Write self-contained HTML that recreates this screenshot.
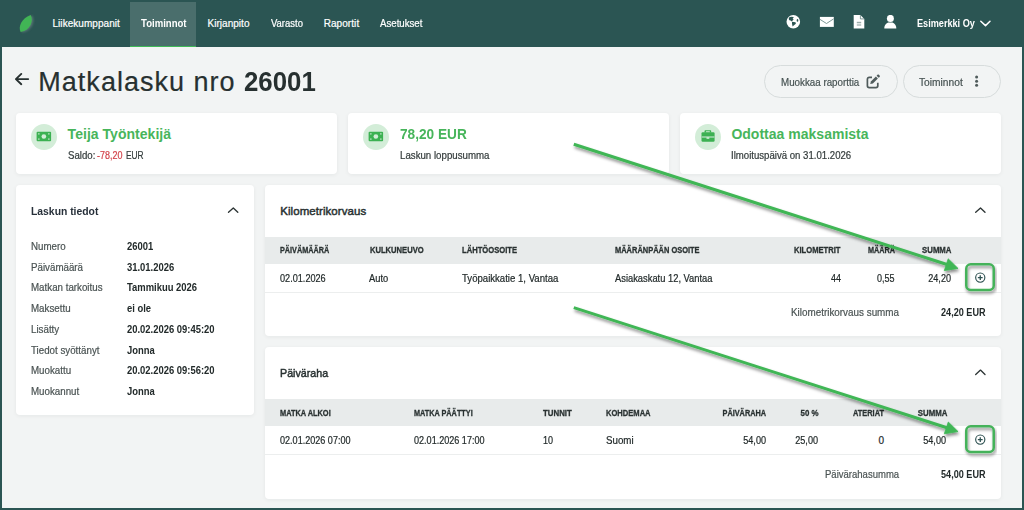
<!DOCTYPE html>
<html><head><meta charset="utf-8">
<style>
*{box-sizing:border-box;margin:0;padding:0}
html,body{width:1024px;height:510px;overflow:hidden}
body{background:#2b5553;font-family:"Liberation Sans",sans-serif;position:relative}
.t{position:absolute;white-space:nowrap;line-height:1;-webkit-text-stroke:0.2px currentColor}
.a{position:absolute}
#main{position:absolute;left:2px;top:47px;width:1020px;height:461px;background:#f2f4f4}
.tab{position:absolute;left:130px;top:2px;width:66px;height:45px;background:#4a6e6c;border-bottom:1px solid #3fb958}
.card{position:absolute;background:#fff;border-radius:4px;box-shadow:0 1px 4px rgba(20,40,40,.06)}
.circ{position:absolute;width:26px;height:26px;border-radius:50%;background:#d3edd8}
.btn{position:absolute;border:1px solid #d7dcdc;border-radius:17px;height:33px;background:#f2f4f4}
.th{position:absolute;left:265px;width:736px;background:#e8ebeb}
.rowb{position:absolute;left:265px;width:736px;height:1px;background:#eceeee}
.pbox{position:absolute;left:965px;width:30px;height:28px;border:2.5px solid #45b25a;border-radius:5px;box-shadow:1px 2px 3px rgba(0,0,0,.35)}
</style></head><body>
<!-- nav -->
<div class="tab"></div>
<svg class="a" style="left:14px;top:10px" width="26" height="28" viewBox="0 0 26 28">
<defs><filter id="ls" x="-50%" y="-50%" width="200%" height="200%"><feGaussianBlur stdDeviation="0.8"/></filter></defs>
<path d="M6.7 22.1 C3.8 17 7.6 8 16.7 4.9 C19.8 10.5 16.6 20 6.7 22.1Z" fill="#76898a" opacity="0.6" transform="translate(1.5,0.5)" filter="url(#ls)"/>
<path d="M6.7 22.1 C3.8 17 7.6 8 16.7 4.9 C19.8 10.5 16.6 20 6.7 22.1Z" fill="#41b555"/>
</svg>
<!-- globe -->
<svg class="a" style="left:786px;top:15px" width="15" height="14" viewBox="0 0 15 14">
<circle cx="7.3" cy="6.8" r="6.8" fill="#fff"/>
<path d="M2.9 2.6 L5 1.8 L7.6 2 L7.4 3 L6.6 3.6 L7.6 4.6 L6.4 5.8 L5.6 6.6 L4.6 5.6 L3.4 5.2 L2.8 4.2Z" fill="#2b5553"/>
<path d="M6 6.8 L9.5 7.2 L9.9 8.8 L8 10.3 L6.6 11.5 L6 8.8Z" fill="#2b5553"/>
<ellipse cx="11.5" cy="5.4" rx="0.8" ry="1.4" fill="#2b5553"/>
</svg>
<!-- mail -->
<svg class="a" style="left:819px;top:16px" width="16" height="12" viewBox="0 0 16 12">
<rect x="0.9" y="0.9" width="13.9" height="10" fill="#fff"/>
<path d="M1 3.4 L7.5 7.5 L14.6 2.9" fill="none" stroke="#6e8c8a" stroke-width="0.9"/>
</svg>
<!-- file -->
<svg class="a" style="left:853px;top:15px" width="12" height="14" viewBox="0 0 12 14">
<path d="M0.7 0 H7.4 L11.3 3.9 V13.5 H0.7Z" fill="#fff"/>
<path d="M7.4 0.2 V3.9 H11.3" fill="none" stroke="#5d7f7d" stroke-width="0.8"/>
<rect x="3.8" y="6.8" width="4.4" height="1.5" fill="#9aabaa"/>
<rect x="3.8" y="9.4" width="4.4" height="1.2" fill="#9aabaa"/>
</svg>
<!-- user -->
<svg class="a" style="left:884px;top:15px" width="14" height="14" viewBox="0 0 14 14">
<circle cx="6.4" cy="3.4" r="3.5" fill="#fff"/>
<path d="M0.3 13.4 C0.3 10 2.6 7.6 5 7.6 H7.6 C10 7.6 12.3 10 12.3 13.4Z" fill="#fff"/>
</svg>
<!-- chevron down -->
<svg class="a" style="left:979px;top:19px" width="13" height="9" viewBox="0 0 13 9">
<path d="M1.8 2.2 L6.5 6.6 L11 2.2" fill="none" stroke="#fff" stroke-width="1.5" stroke-linecap="round" stroke-linejoin="round"/>
</svg>

<div id="main"></div>

<!-- back arrow -->
<svg class="a" style="left:13px;top:71px" width="18" height="16" viewBox="0 0 18 16">
<path d="M2.9 8.1 H15.2 M2.9 8.1 L8.3 2.9 M2.9 8.1 L8.3 13.2" fill="none" stroke="#273030" stroke-width="1.9" stroke-linecap="round" stroke-linejoin="round"/>
</svg>

<div class="btn" style="left:764px;top:65px;width:134px"></div>
<div class="btn" style="left:903px;top:65px;width:98px"></div>
<!-- edit icon -->
<svg class="a" style="left:866px;top:74px" width="15" height="15" viewBox="0 0 15 15">
<path d="M6 3.3 H3.3 C2.1 3.3 1.4 4 1.4 5.2 V11.8 C1.4 13 2.1 13.7 3.3 13.7 H9.9 C11.1 13.7 11.8 13 11.8 11.8 V8.8" fill="none" stroke="#4f5b5b" stroke-width="1.7"/>
<path d="M4.2 10.1 L4.9 7.4 L9.9 2.4 L11.9 4.4 L6.9 9.4Z" fill="#4f5b5b"/>
<path d="M10.6 1.7 L11.5 0.8 C11.9 0.4 12.5 0.4 12.9 0.8 L13.6 1.5 C14 1.9 14 2.5 13.6 2.9 L12.7 3.8Z" fill="#4f5b5b"/>
</svg>
<!-- dots -->
<svg class="a" style="left:974px;top:75px" width="6" height="13" viewBox="0 0 6 13">
<circle cx="2.6" cy="2.1" r="1.5" fill="#4f5b5b"/><circle cx="2.6" cy="6.25" r="1.5" fill="#4f5b5b"/><circle cx="2.6" cy="10.35" r="1.5" fill="#4f5b5b"/>
</svg>

<!-- summary cards -->
<div class="card" style="left:16px;top:113px;width:321px;height:61px"></div>
<div class="card" style="left:348px;top:113px;width:321px;height:61px"></div>
<div class="card" style="left:680px;top:113px;width:321px;height:61px"></div>
<div class="circ" style="left:31px;top:124px"></div>
<div class="circ" style="left:363px;top:124px"></div>
<div class="circ" style="left:695px;top:124px"></div>
<svg class="a" style="left:36px;top:131px" width="16" height="12" viewBox="0 0 16 12">
<rect x="0.6" y="0.8" width="14.5" height="9.4" rx="1" fill="#3cb152"/>
<circle cx="7.85" cy="5.5" r="2.35" fill="#d3edd8"/>
<circle cx="2.85" cy="2.85" r="0.9" fill="#a9dcb3"/><circle cx="12.85" cy="2.85" r="0.9" fill="#a9dcb3"/>
<circle cx="2.85" cy="8.1" r="0.9" fill="#a9dcb3"/><circle cx="12.85" cy="8.1" r="0.9" fill="#a9dcb3"/>
</svg>
<svg class="a" style="left:368px;top:131px" width="16" height="12" viewBox="0 0 16 12">
<rect x="0.6" y="0.8" width="14.5" height="9.4" rx="1" fill="#3cb152"/>
<circle cx="7.85" cy="5.5" r="2.35" fill="#d3edd8"/>
<circle cx="2.85" cy="2.85" r="0.9" fill="#a9dcb3"/><circle cx="12.85" cy="2.85" r="0.9" fill="#a9dcb3"/>
<circle cx="2.85" cy="8.1" r="0.9" fill="#a9dcb3"/><circle cx="12.85" cy="8.1" r="0.9" fill="#a9dcb3"/>
</svg>
<svg class="a" style="left:700px;top:129px" width="16" height="15" viewBox="0 0 16 15">
<path fill-rule="evenodd" d="M5.5 1.2 H10.2 C10.8 1.2 11.2 1.6 11.2 2.2 V3.4 H9.6 V2.3 H6.1 V3.4 H4.5 V2.2 C4.5 1.6 4.9 1.2 5.5 1.2Z" fill="#3cb152"/>
<rect x="6.1" y="2.3" width="3.5" height="1.1" fill="#a9dcb3"/>
<rect x="1.5" y="3.3" width="13.1" height="9.5" rx="1.2" fill="#3cb152"/>
<rect x="1.5" y="7.2" width="13.1" height="1.6" fill="#9fd6ab"/>
<rect x="6.5" y="8.2" width="2.8" height="1.6" fill="#d3edd8"/>
</svg>

<!-- left card -->
<div class="card" style="left:16px;top:185px;width:238px;height:230px"></div>
<svg class="a" style="left:226px;top:204px" width="14" height="12" viewBox="0 0 14 12">
<path d="M2.5 8.35 L7.3 4 L11.8 8.35" fill="none" stroke="#2d3535" stroke-width="1.35" stroke-linecap="round" stroke-linejoin="round"/>
</svg>

<!-- table cards -->
<div class="card" style="left:265px;top:185px;width:736px;height:151px"></div>
<div class="card" style="left:265px;top:347px;width:736px;height:152px"></div>
<div class="th" style="top:237px;height:27px"></div>
<div class="rowb" style="top:292px"></div>
<div class="th" style="top:399px;height:27px"></div>
<div class="rowb" style="top:454px"></div>
<svg class="a" style="left:973px;top:204px" width="14" height="12" viewBox="0 0 14 12">
<path d="M2.7 8.35 L7.5 4 L12 8.35" fill="none" stroke="#2d3535" stroke-width="1.35" stroke-linecap="round" stroke-linejoin="round"/>
</svg>
<svg class="a" style="left:973px;top:366px" width="14" height="12" viewBox="0 0 14 12">
<path d="M2.7 8.45 L7.5 4.1 L12 8.45" fill="none" stroke="#2d3535" stroke-width="1.35" stroke-linecap="round" stroke-linejoin="round"/>
</svg>

<div class="t" style="top:19.00px;font-size:10px;color:#ffffff;letter-spacing:0.044px;left:52.50px;">Liikekumppanit</div>
<div class="t" style="top:19.00px;font-size:10px;color:#ffffff;letter-spacing:0.030px;left:207.50px;">Kirjanpito</div>
<div class="t" style="top:19.00px;font-size:10px;color:#ffffff;transform:scaleX(0.9456);transform-origin:left center;left:270.80px;">Varasto</div>
<div class="t" style="top:19.00px;font-size:10px;color:#ffffff;letter-spacing:0.066px;left:323.70px;">Raportit</div>
<div class="t" style="top:19.00px;font-size:10px;color:#ffffff;transform:scaleX(0.9653);transform-origin:left center;left:380.00px;">Asetukset</div>
<div class="t" style="top:19.00px;font-size:10px;color:#ffffff;font-weight:bold;-webkit-text-stroke:0;transform:scaleX(0.9576);transform-origin:left center;left:140.80px;">Toiminnot</div>
<div class="t" style="top:19.00px;font-size:10px;color:#ffffff;font-weight:bold;-webkit-text-stroke:0;transform:scaleX(0.9128);transform-origin:left center;left:916.75px;">Esimerkki Oy</div>
<div class="t" style="top:69.00px;font-size:27px;color:#273030;letter-spacing:1.018px;left:38.30px;">Matkalasku nro</div>
<div class="t" style="top:69.00px;font-size:27px;color:#273030;font-weight:bold;-webkit-text-stroke:0;transform:scaleX(0.9565);transform-origin:left center;left:244.00px;">26001</div>
<div class="t" style="top:77.00px;font-size:10.5px;color:#465252;transform:scaleX(0.9311);transform-origin:left center;left:780.80px;">Muokkaa raporttia</div>
<div class="t" style="top:77.00px;font-size:10.5px;color:#465252;transform:scaleX(0.9729);transform-origin:left center;left:919.40px;">Toiminnot</div>
<div class="t" style="top:127.00px;font-size:14px;color:#47b55b;font-weight:bold;-webkit-text-stroke:0;letter-spacing:0.035px;left:67.60px;">Teija Työntekijä</div>
<div class="t" style="top:127.00px;font-size:14px;color:#47b55b;font-weight:bold;-webkit-text-stroke:0;transform:scaleX(0.9755);transform-origin:left center;left:399.80px;">78,20 EUR</div>
<div class="t" style="top:127.00px;font-size:14px;color:#47b55b;font-weight:bold;-webkit-text-stroke:0;letter-spacing:0.014px;left:731.40px;">Odottaa maksamista</div>
<div class="t" style="top:151.00px;font-size:10px;color:#333b3b;transform:scaleX(0.9646);transform-origin:left center;left:67.60px;">Saldo:</div>
<div class="t" style="top:151.00px;font-size:10px;color:#d2434b;transform:scaleX(0.8961);transform-origin:left center;left:96.90px;">-78,20</div>
<div class="t" style="top:151.00px;font-size:10px;color:#333b3b;transform:scaleX(0.8329);transform-origin:left center;left:125.60px;">EUR</div>
<div class="t" style="top:151.00px;font-size:10px;color:#333b3b;transform:scaleX(0.9696);transform-origin:left center;left:399.80px;">Laskun loppusumma</div>
<div class="t" style="top:151.00px;font-size:10px;color:#333b3b;transform:scaleX(0.9608);transform-origin:left center;left:731.40px;">Ilmoituspäivä on 31.01.2026</div>
<div class="t" style="top:206.00px;font-size:11px;color:#27303a;font-weight:bold;-webkit-text-stroke:0;transform:scaleX(0.9423);transform-origin:left center;left:31.30px;">Laskun tiedot</div>
<div class="t" style="top:242.00px;font-size:10px;color:#4a5353;transform:scaleX(0.9750);transform-origin:left center;left:31.30px;">Numero</div>
<div class="t" style="top:242.00px;font-size:10px;color:#222a2a;font-weight:bold;-webkit-text-stroke:0;transform:scaleX(0.9430);transform-origin:left center;left:127.20px;">26001</div>
<div class="t" style="top:263.00px;font-size:10px;color:#4a5353;transform:scaleX(0.9750);transform-origin:left center;left:31.30px;">Päivämäärä</div>
<div class="t" style="top:263.00px;font-size:10px;color:#222a2a;font-weight:bold;-webkit-text-stroke:0;transform:scaleX(0.9430);transform-origin:left center;left:127.20px;">31.01.2026</div>
<div class="t" style="top:283.00px;font-size:10px;color:#4a5353;transform:scaleX(0.9750);transform-origin:left center;left:31.30px;">Matkan tarkoitus</div>
<div class="t" style="top:283.00px;font-size:10px;color:#222a2a;font-weight:bold;-webkit-text-stroke:0;transform:scaleX(0.9430);transform-origin:left center;left:127.20px;">Tammikuu 2026</div>
<div class="t" style="top:304.00px;font-size:10px;color:#4a5353;transform:scaleX(0.9750);transform-origin:left center;left:31.30px;">Maksettu</div>
<div class="t" style="top:304.00px;font-size:10px;color:#222a2a;font-weight:bold;-webkit-text-stroke:0;transform:scaleX(0.9430);transform-origin:left center;left:127.20px;">ei ole</div>
<div class="t" style="top:325.00px;font-size:10px;color:#4a5353;transform:scaleX(0.9750);transform-origin:left center;left:31.30px;">Lisätty</div>
<div class="t" style="top:325.00px;font-size:10px;color:#222a2a;font-weight:bold;-webkit-text-stroke:0;transform:scaleX(0.9430);transform-origin:left center;left:127.20px;">20.02.2026 09:45:20</div>
<div class="t" style="top:346.00px;font-size:10px;color:#4a5353;transform:scaleX(0.9750);transform-origin:left center;left:31.30px;">Tiedot syöttänyt</div>
<div class="t" style="top:346.00px;font-size:10px;color:#222a2a;font-weight:bold;-webkit-text-stroke:0;transform:scaleX(0.9430);transform-origin:left center;left:127.20px;">Jonna</div>
<div class="t" style="top:366.00px;font-size:10px;color:#4a5353;transform:scaleX(0.9750);transform-origin:left center;left:31.30px;">Muokattu</div>
<div class="t" style="top:366.00px;font-size:10px;color:#222a2a;font-weight:bold;-webkit-text-stroke:0;transform:scaleX(0.9430);transform-origin:left center;left:127.20px;">20.02.2026 09:56:20</div>
<div class="t" style="top:387.00px;font-size:10px;color:#4a5353;transform:scaleX(0.9750);transform-origin:left center;left:31.30px;">Muokannut</div>
<div class="t" style="top:387.00px;font-size:10px;color:#222a2a;font-weight:bold;-webkit-text-stroke:0;transform:scaleX(0.9430);transform-origin:left center;left:127.20px;">Jonna</div>
<div class="t" style="top:206.00px;font-size:11.5px;color:#273030;letter-spacing:0.070px;left:280.20px;-webkit-text-stroke:0.45px currentColor;">Kilometrikorvaus</div>
<div class="t" style="top:246.00px;font-size:8.6px;color:#2a3232;font-weight:bold;-webkit-text-stroke:0.3px currentColor;transform:scaleX(0.8442);transform-origin:left center;left:280.20px;">PÄIVÄMÄÄRÄ</div>
<div class="t" style="top:246.00px;font-size:8.6px;color:#2a3232;font-weight:bold;-webkit-text-stroke:0.3px currentColor;transform:scaleX(0.8843);transform-origin:left center;left:369.60px;">KULKUNEUVO</div>
<div class="t" style="top:246.00px;font-size:8.6px;color:#2a3232;font-weight:bold;-webkit-text-stroke:0.3px currentColor;transform:scaleX(0.8856);transform-origin:left center;left:461.90px;">LÄHTÖOSOITE</div>
<div class="t" style="top:246.00px;font-size:8.6px;color:#2a3232;font-weight:bold;-webkit-text-stroke:0.3px currentColor;transform:scaleX(0.8683);transform-origin:left center;left:614.50px;">MÄÄRÄNPÄÄN OSOITE</div>
<div class="t" style="top:246.00px;font-size:8.6px;color:#2a3232;font-weight:bold;-webkit-text-stroke:0.3px currentColor;transform:scaleX(0.8862);transform-origin:right center;right:183.47px;">KILOMETRIT</div>
<div class="t" style="top:246.00px;font-size:8.6px;color:#2a3232;font-weight:bold;-webkit-text-stroke:0.3px currentColor;transform:scaleX(0.8434);transform-origin:right center;right:128.83px;">MÄÄRÄ</div>
<div class="t" style="top:246.00px;font-size:8.6px;color:#2a3232;font-weight:bold;-webkit-text-stroke:0.3px currentColor;transform:scaleX(0.9053);transform-origin:right center;right:72.41px;">SUMMA</div>
<div class="t" style="top:274.00px;font-size:10px;color:#222a2a;transform:scaleX(0.9131);transform-origin:left center;left:280.20px;">02.01.2026</div>
<div class="t" style="top:274.00px;font-size:10px;color:#222a2a;transform:scaleX(0.9329);transform-origin:left center;left:369.40px;">Auto</div>
<div class="t" style="top:274.00px;font-size:10px;color:#222a2a;transform:scaleX(0.9596);transform-origin:left center;left:461.90px;">Työpaikkatie 1, Vantaa</div>
<div class="t" style="top:274.00px;font-size:10px;color:#222a2a;transform:scaleX(0.9345);transform-origin:left center;left:614.50px;">Asiakaskatu 12, Vantaa</div>
<div class="t" style="top:274.00px;font-size:10px;color:#222a2a;transform:scaleX(0.9000);transform-origin:right center;right:183.19px;">44</div>
<div class="t" style="top:274.00px;font-size:10px;color:#222a2a;transform:scaleX(0.8994);transform-origin:right center;right:129.39px;">0,55</div>
<div class="t" style="top:274.00px;font-size:10px;color:#222a2a;transform:scaleX(0.9111);transform-origin:right center;right:73.00px;">24,20</div>
<div class="t" style="top:307.00px;font-size:10.5px;color:#4a5353;transform:scaleX(0.9400);transform-origin:left center;left:791.20px;">Kilometrikorvaus summa</div>
<div class="t" style="top:307.00px;font-size:10.5px;color:#222a2a;font-weight:bold;-webkit-text-stroke:0;transform:scaleX(0.8671);transform-origin:left center;left:940.70px;">24,20 EUR</div>
<div class="t" style="top:368.00px;font-size:11.5px;color:#273030;transform:scaleX(0.9315);transform-origin:left center;left:280.30px;-webkit-text-stroke:0.45px currentColor;">Päiväraha</div>
<div class="t" style="top:409.00px;font-size:8.6px;color:#2a3232;font-weight:bold;-webkit-text-stroke:0.3px currentColor;transform:scaleX(0.8609);transform-origin:left center;left:280.30px;">MATKA ALKOI</div>
<div class="t" style="top:409.00px;font-size:8.6px;color:#2a3232;font-weight:bold;-webkit-text-stroke:0.3px currentColor;transform:scaleX(0.8474);transform-origin:left center;left:414.40px;">MATKA PÄÄTTYI</div>
<div class="t" style="top:409.00px;font-size:8.6px;color:#2a3232;font-weight:bold;-webkit-text-stroke:0.3px currentColor;transform:scaleX(0.9146);transform-origin:left center;left:542.70px;">TUNNIT</div>
<div class="t" style="top:409.00px;font-size:8.6px;color:#2a3232;font-weight:bold;-webkit-text-stroke:0.3px currentColor;transform:scaleX(0.8810);transform-origin:left center;left:606.40px;">KOHDEMAA</div>
<div class="t" style="top:409.00px;font-size:8.6px;color:#2a3232;font-weight:bold;-webkit-text-stroke:0.3px currentColor;transform:scaleX(0.8530);transform-origin:right center;right:257.52px;">PÄIVÄRAHA</div>
<div class="t" style="top:409.00px;font-size:8.6px;color:#2a3232;font-weight:bold;-webkit-text-stroke:0.3px currentColor;transform:scaleX(0.9175);transform-origin:right center;right:205.63px;">50 %</div>
<div class="t" style="top:409.00px;font-size:8.6px;color:#2a3232;font-weight:bold;-webkit-text-stroke:0.3px currentColor;transform:scaleX(0.8608);transform-origin:right center;right:140.05px;">ATERIAT</div>
<div class="t" style="top:409.00px;font-size:8.6px;color:#2a3232;font-weight:bold;-webkit-text-stroke:0.3px currentColor;transform:scaleX(0.9115);transform-origin:right center;right:76.91px;">SUMMA</div>
<div class="t" style="top:436.00px;font-size:10px;color:#222a2a;transform:scaleX(0.9056);transform-origin:left center;left:280.30px;">02.01.2026 07:00</div>
<div class="t" style="top:436.00px;font-size:10px;color:#222a2a;transform:scaleX(0.9056);transform-origin:left center;left:414.40px;">02.01.2026 17:00</div>
<div class="t" style="top:436.00px;font-size:10px;color:#222a2a;transform:scaleX(0.9000);transform-origin:left center;left:542.70px;">10</div>
<div class="t" style="top:436.00px;font-size:10px;color:#222a2a;transform:scaleX(0.9743);transform-origin:left center;left:606.40px;">Suomi</div>
<div class="t" style="top:436.00px;font-size:10px;color:#222a2a;transform:scaleX(0.9111);transform-origin:right center;right:258.10px;">54,00</div>
<div class="t" style="top:436.00px;font-size:10px;color:#222a2a;transform:scaleX(0.9111);transform-origin:right center;right:205.70px;">25,00</div>
<div class="t" style="top:436.00px;font-size:10px;color:#222a2a;right:139.84px;">0</div>
<div class="t" style="top:436.00px;font-size:10px;color:#222a2a;transform:scaleX(0.9111);transform-origin:right center;right:77.50px;">54,00</div>
<div class="t" style="top:469.00px;font-size:10.5px;color:#4a5353;transform:scaleX(0.9076);transform-origin:left center;left:825.10px;">Päivärahasumma</div>
<div class="t" style="top:469.00px;font-size:10.5px;color:#222a2a;font-weight:bold;-webkit-text-stroke:0;transform:scaleX(0.8671);transform-origin:left center;left:940.70px;">54,00 EUR</div>

<!-- plus boxes -->
<svg class="a" style="left:973px;top:271px" width="14" height="14" viewBox="0 0 14 14">
<circle cx="7.25" cy="6.6" r="4.6" fill="none" stroke="#2d5050" stroke-width="1.15"/>
<path d="M7.25 4.2 V9 M4.85 6.6 H9.65" stroke="#2d5050" stroke-width="1.3"/>
</svg>
<svg class="a" style="left:973px;top:433px" width="14" height="14" viewBox="0 0 14 14">
<circle cx="7.25" cy="6.6" r="4.6" fill="none" stroke="#2d5050" stroke-width="1.15"/>
<path d="M7.25 4.2 V9 M4.85 6.6 H9.65" stroke="#2d5050" stroke-width="1.3"/>
</svg>
<!-- arrows -->
<svg class="a" style="left:0;top:0" width="1024" height="510" viewBox="0 0 1024 510">
<defs><filter id="sh" x="-10%" y="-50%" width="120%" height="200%"><feDropShadow dx="1" dy="2.4" stdDeviation="1.6" flood-color="#000" flood-opacity="0.45"/></filter></defs>
<g filter="url(#sh)">
<rect x="966.25" y="264.25" width="27.5" height="25.8" rx="4.5" fill="none" stroke="#45b25a" stroke-width="2.5"/>
<rect x="966.25" y="426.25" width="27.5" height="25.8" rx="4.5" fill="none" stroke="#45b25a" stroke-width="2.5"/>
</g>
<g filter="url(#sh)">
<path d="M573.8 144.2 L947 264.5" stroke="#3fb655" stroke-width="3" stroke-linecap="butt"/>
<path d="M948.2 258.8 L958 268.4 L944.3 270.6Z" fill="#3fb655" stroke="#3fb655" stroke-width="0.8" stroke-linejoin="round"/>
</g>
<g filter="url(#sh)">
<path d="M573.8 307.6 L947 427.8" stroke="#3fb655" stroke-width="3" stroke-linecap="butt"/>
<path d="M948.3 422 L958 431.6 L944.3 433.8Z" fill="#3fb655" stroke="#3fb655" stroke-width="0.8" stroke-linejoin="round"/>
</g>
</svg>
</body></html>
